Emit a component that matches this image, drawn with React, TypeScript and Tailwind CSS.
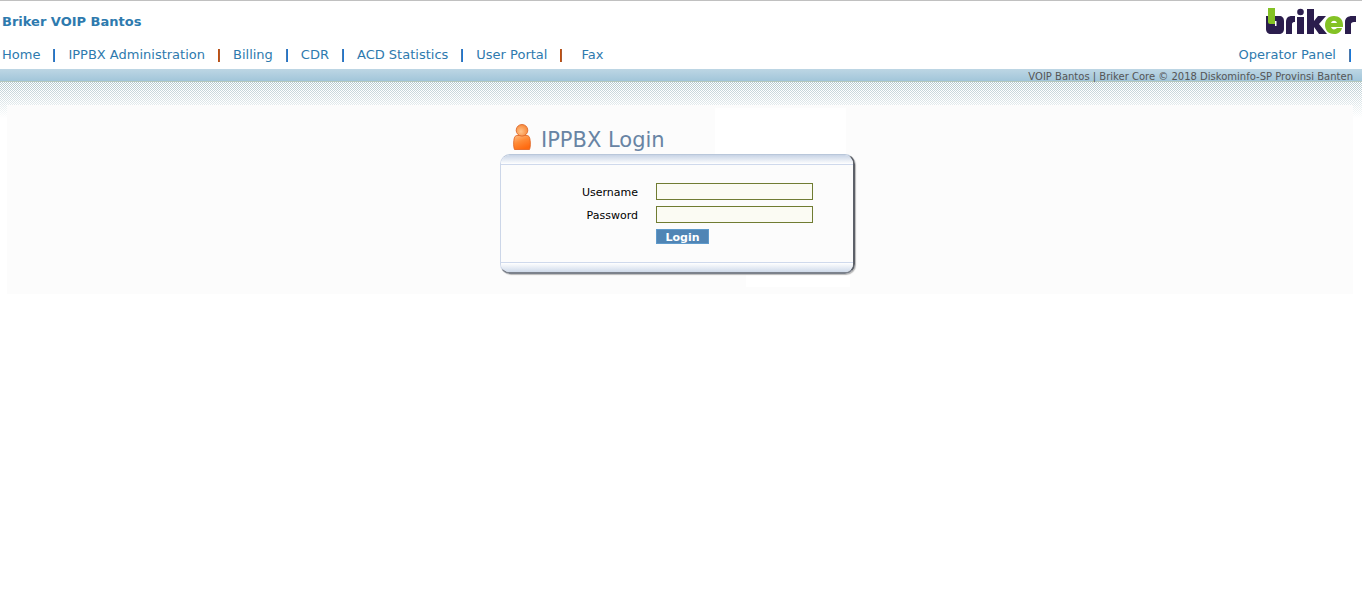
import type { ReactNode } from "react";

type NavItem = { label: string; bar?: "blue" | "orange" };

const navItems: NavItem[] = [
  { label: "Home", bar: "blue" },
  { label: "IPPBX Administration", bar: "orange" },
  { label: "Billing", bar: "blue" },
  { label: "CDR", bar: "blue" },
  { label: "ACD Statistics", bar: "blue" },
  { label: "User Portal", bar: "orange" },
  { label: "Fax" },
];

const barColors = {
  blue: "border-l-[#4a78ac] border-r-[#1b78d6] bg-[#1b78d6]",
  orange: "border-l-[#c4500c] border-r-[#a85a34] bg-[#c4500c]",
};

function Bar({ color }: { color: "blue" | "orange" }) {
  return <span aria-hidden="true" className={`h-[13px] w-0.5 border-x ${barColors[color]}`} />;
}

function NavLink({ children }: { children: ReactNode }) {
  return (
    <a href="#" className="whitespace-nowrap text-[#2e7aae] hover:underline">
      {children}
    </a>
  );
}

function Logo() {
  return (
    <svg role="img" aria-label="briker" viewBox="0 0 90 28" className="h-7 w-[90px]">
      <g fill="#2b1d4d">
        <path
          fillRule="evenodd"
          d="M0 8h13c3.500 0 5 2 5 5v8c0 3-2 5-5 5H5c-3 0-5-2-5-5zM9 13v5h1.500v-5z"
        />
        <path d="M20 26V14c0-4 2-6 6-6h3v6h-1c-1 0-2 1-2 2v10z" />
        <path d="M31 9h7v17h-7z" />
        <circle cx="34.500" cy="4" r="3.300" />
        <path d="M41 1h7v12l4-5h8l-7 8 8 10h-8l-5-7v7h-7z" />
        <path d="M79 26V14c0-4 3-6 7-6h4v6h-2c-2 0-3 1-3 2v10z" />
      </g>
      <path fill="#84c225" d="M2 0h7v16H4c-1 0-2-1-2-2z" />
      <path
        fill="#84c225"
        fillRule="evenodd"
        d="M68 8c5 0 9 3 9 9v2H65c1 3 4 3 6 1h5c-1 4-4 6-8 6-6 0-9-4-9-9s3-9 9-9zm-3 7h6c-1-3-5-3-6 0z"
      />
    </svg>
  );
}

function UserIcon() {
  return (
    <svg aria-hidden="true" viewBox="0 0 18 26" className="h-[26px] w-[18px]">
      <defs>
        <radialGradient id="head" cx=".4" cy=".6" r=".6">
          <stop offset="0" stopColor="#ffc38a" />
          <stop offset="1" stopColor="#f98b3c" />
        </radialGradient>
        <linearGradient id="body" x1="0" y1="0" x2=".5" y2="1">
          <stop offset="0" stopColor="#ffbd85" />
          <stop offset=".5" stopColor="#ff8a35" />
          <stop offset="1" stopColor="#ff6a10" />
        </linearGradient>
      </defs>
      <path
        d="M4 11.500h10c2 0 3 2 3.300 6.500.2 3 0 5.500-.8 7.500h-15C.700 23.500.500 21 .700 18 1 13.500 2 11.500 4 11.500z"
        fill="url(#body)"
        stroke="#e0601c"
        strokeWidth=".8"
      />
      <circle cx="9" cy="6.300" r="5.800" fill="url(#head)" stroke="#dc6a2c" strokeWidth=".9" />
    </svg>
  );
}

function DotTexture() {
  return (
    <svg
      aria-hidden="true"
      shapeRendering="crispEdges"
      className="absolute inset-x-0 top-0 h-9 w-full mask-linear-to-b mask-b-from-0% mask-b-to-100%"
    >
      <defs>
        <pattern id="dots" width="2" height="2" patternUnits="userSpaceOnUse">
          <path d="M0 0h1v1H0zM1 1h1v1H1z" fill="#b3c8ce" />
        </pattern>
      </defs>
      <rect width="100%" height="100%" fill="url(#dots)" />
    </svg>
  );
}

function Field({ id, label, type }: { id: string; label: string; type: string }) {
  return (
    <>
      <label htmlFor={id} className="pt-0.5 text-right leading-[15px]">
        {label}
      </label>
      <input
        id={id}
        type={type}
        className="h-[17px] w-[157px] border border-[#707c32] bg-[#fbfbf3] px-1 text-[11px] outline-none"
      />
    </>
  );
}

export default function App() {
  return (
    <div className="min-h-screen border-t border-[#c0c0c0] bg-white font-['DejaVu_Sans',Verdana,sans-serif] text-[11px] text-black">
      <header>
        <div className="flex h-10 items-center justify-between pt-0.5 pr-1.5 pl-0.5">
          <h1 className="text-[13px] font-bold text-[#2e7aae]">Briker VOIP Bantos</h1>
          <Logo />
        </div>
        <nav className="flex h-7 items-center justify-between pr-[11px] pl-0.5 text-[13px]">
          <ul className="flex items-center gap-[13px]">
            {navItems.map((item) => (
              <li key={item.label} className="flex items-center gap-[13px] last:pl-1.5">
                <NavLink>{item.label}</NavLink>
                {item.bar && <Bar color={item.bar} />}
              </li>
            ))}
          </ul>
          <div className="flex items-center gap-[13px]">
            <NavLink>Operator Panel</NavLink>
            <Bar color="blue" />
          </div>
        </nav>
        <p className="h-[13px] border-b border-[#b4c8be] bg-linear-to-b from-[#bdd6e4] to-[#a2c6da] pr-[9px] text-right text-[10px] leading-[15px] text-[#555]">
          VOIP Bantos | Briker Core © 2018 Diskominfo-SP Provinsi Banten
        </p>
      </header>

      <div className="relative pt-[23px] pr-[9px] pl-[7px]">
        <DotTexture />
        <main className="relative flex h-[189px] flex-col items-center bg-[#fcfcfc] bg-[linear-gradient(#fff,#fff),linear-gradient(#fff,#fff)] bg-[size:131px_46px,104px_12px] bg-[position:calc(50%+100px)_3px,calc(50%+118px)_170px] bg-no-repeat pt-[18px] pr-[5px]">
          <section className="w-[355px]">
            <h2 className="flex h-[31px] items-start gap-2.5 pt-px pl-[13px] text-[21px] leading-8 text-[#6884a4]">
              <UserIcon />
              IPPBX Login
            </h2>
            <div className="overflow-hidden rounded-[10px] border-t border-r-2 border-b-2 border-l border-t-[#b9c7da] border-r-[#5c6068] border-b-[#7c828c] border-l-[#ccd6e8] shadow-[1px_1px_1px_#b8b8b8]">
              <div className="h-2.5 border-b border-[#cfd9ec] bg-linear-to-b from-[#c8d4e6] to-white" />
              <form
                className="grid h-[97px] grid-cols-[137px_157px] content-start items-center gap-x-[18px] gap-y-1.5 pt-[18px]"
                onSubmit={(event) => event.preventDefault()}
              >
                <Field id="username" label="Username" type="text" />
                <Field id="password" label="Password" type="password" />
                <button
                  type="submit"
                  className="col-start-2 h-[15px] w-[53px] border border-[#5f9acb] bg-[#5085b5] pt-0.5 text-[11px] leading-[11px] font-bold text-white"
                >
                  Login
                </button>
              </form>
              <div className="h-2.5 border-t border-[#cfd9ec] bg-linear-to-b from-white to-[#cfdaea]" />
            </div>
          </section>
        </main>
      </div>
    </div>
  );
}
